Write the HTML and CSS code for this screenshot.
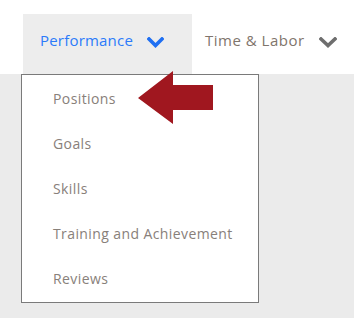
FILE: index.html
```html
<!DOCTYPE html>
<html>
<head>
<meta charset="utf-8">
<link rel="stylesheet" href="styles.css">
</head>
<body>
<div class="topbar">
  <div class="tab tab-active">
    <span class="tab-label">Performance</span>
    <svg class="chev" width="17" height="11" viewBox="0 0 17 11"><polyline points="2,2 8.5,8.5 15,2" fill="none" stroke="#1f6ff2" stroke-width="3.6" stroke-linecap="square"/></svg>
  </div>
  <div class="tab tab-plain">
    <span class="tab-label">Time &amp; Labor</span>
    <svg class="chev" width="18" height="11" viewBox="0 0 18 11"><polyline points="2,2 9,8.5 16,2" fill="none" stroke="#6e6e6e" stroke-width="3.6" stroke-linecap="square"/></svg>
  </div>
</div>
<div class="menu">
  <div class="item">Positions</div>
  <div class="item">Goals</div>
  <div class="item">Skills</div>
  <div class="item">Training and Achievement</div>
  <div class="item">Reviews</div>
</div>
<svg class="pointer" width="75" height="53" viewBox="0 0 75 53"><polygon points="0,27 35,0 35,14 75,14 75,39 35,39 35,53" fill="#a0171f"/></svg>
</body>
</html>
```
FILE: styles.css
```css
html, body {
  margin: 0;
  padding: 0;
}
body {
  background: #ebebeb;
  width: 354px;
  height: 318px;
  overflow: hidden;
  position: relative;
  font-family: "Open Sans", "Liberation Sans", sans-serif;
}
.topbar {
  background: #ffffff;
  height: 74px;
  box-sizing: border-box;
  padding: 14px 0 0 23px;
  display: flex;
}
.tab {
  height: 60px;
  display: flex;
  align-items: center;
  box-sizing: border-box;
  padding-bottom: 9px;
  font-size: 15px;
}
.tab-active {
  background: #ededed;
  width: 169px;
  padding-left: 17px;
  color: #2b7bfa;
  letter-spacing: 0.2px;
}
.tab-plain {
  padding-left: 13px;
  color: #7f756c;
  letter-spacing: 0.5px;
}
.chev {
  margin-left: 14px;
  margin-top: 6px;
}
.menu {
  position: absolute;
  left: 21px;
  top: 74px;
  width: 238px;
  height: 229px;
  box-sizing: border-box;
  background: #ffffff;
  border: 1px solid #7a7a7a;
  padding-top: 1px;
}
.item {
  height: 45px;
  line-height: 45px;
  padding-left: 31px;
  font-size: 14px;
  letter-spacing: 0.4px;
  color: #88807a;
}
.pointer {
  position: absolute;
  left: 138px;
  top: 71px;
}
```
